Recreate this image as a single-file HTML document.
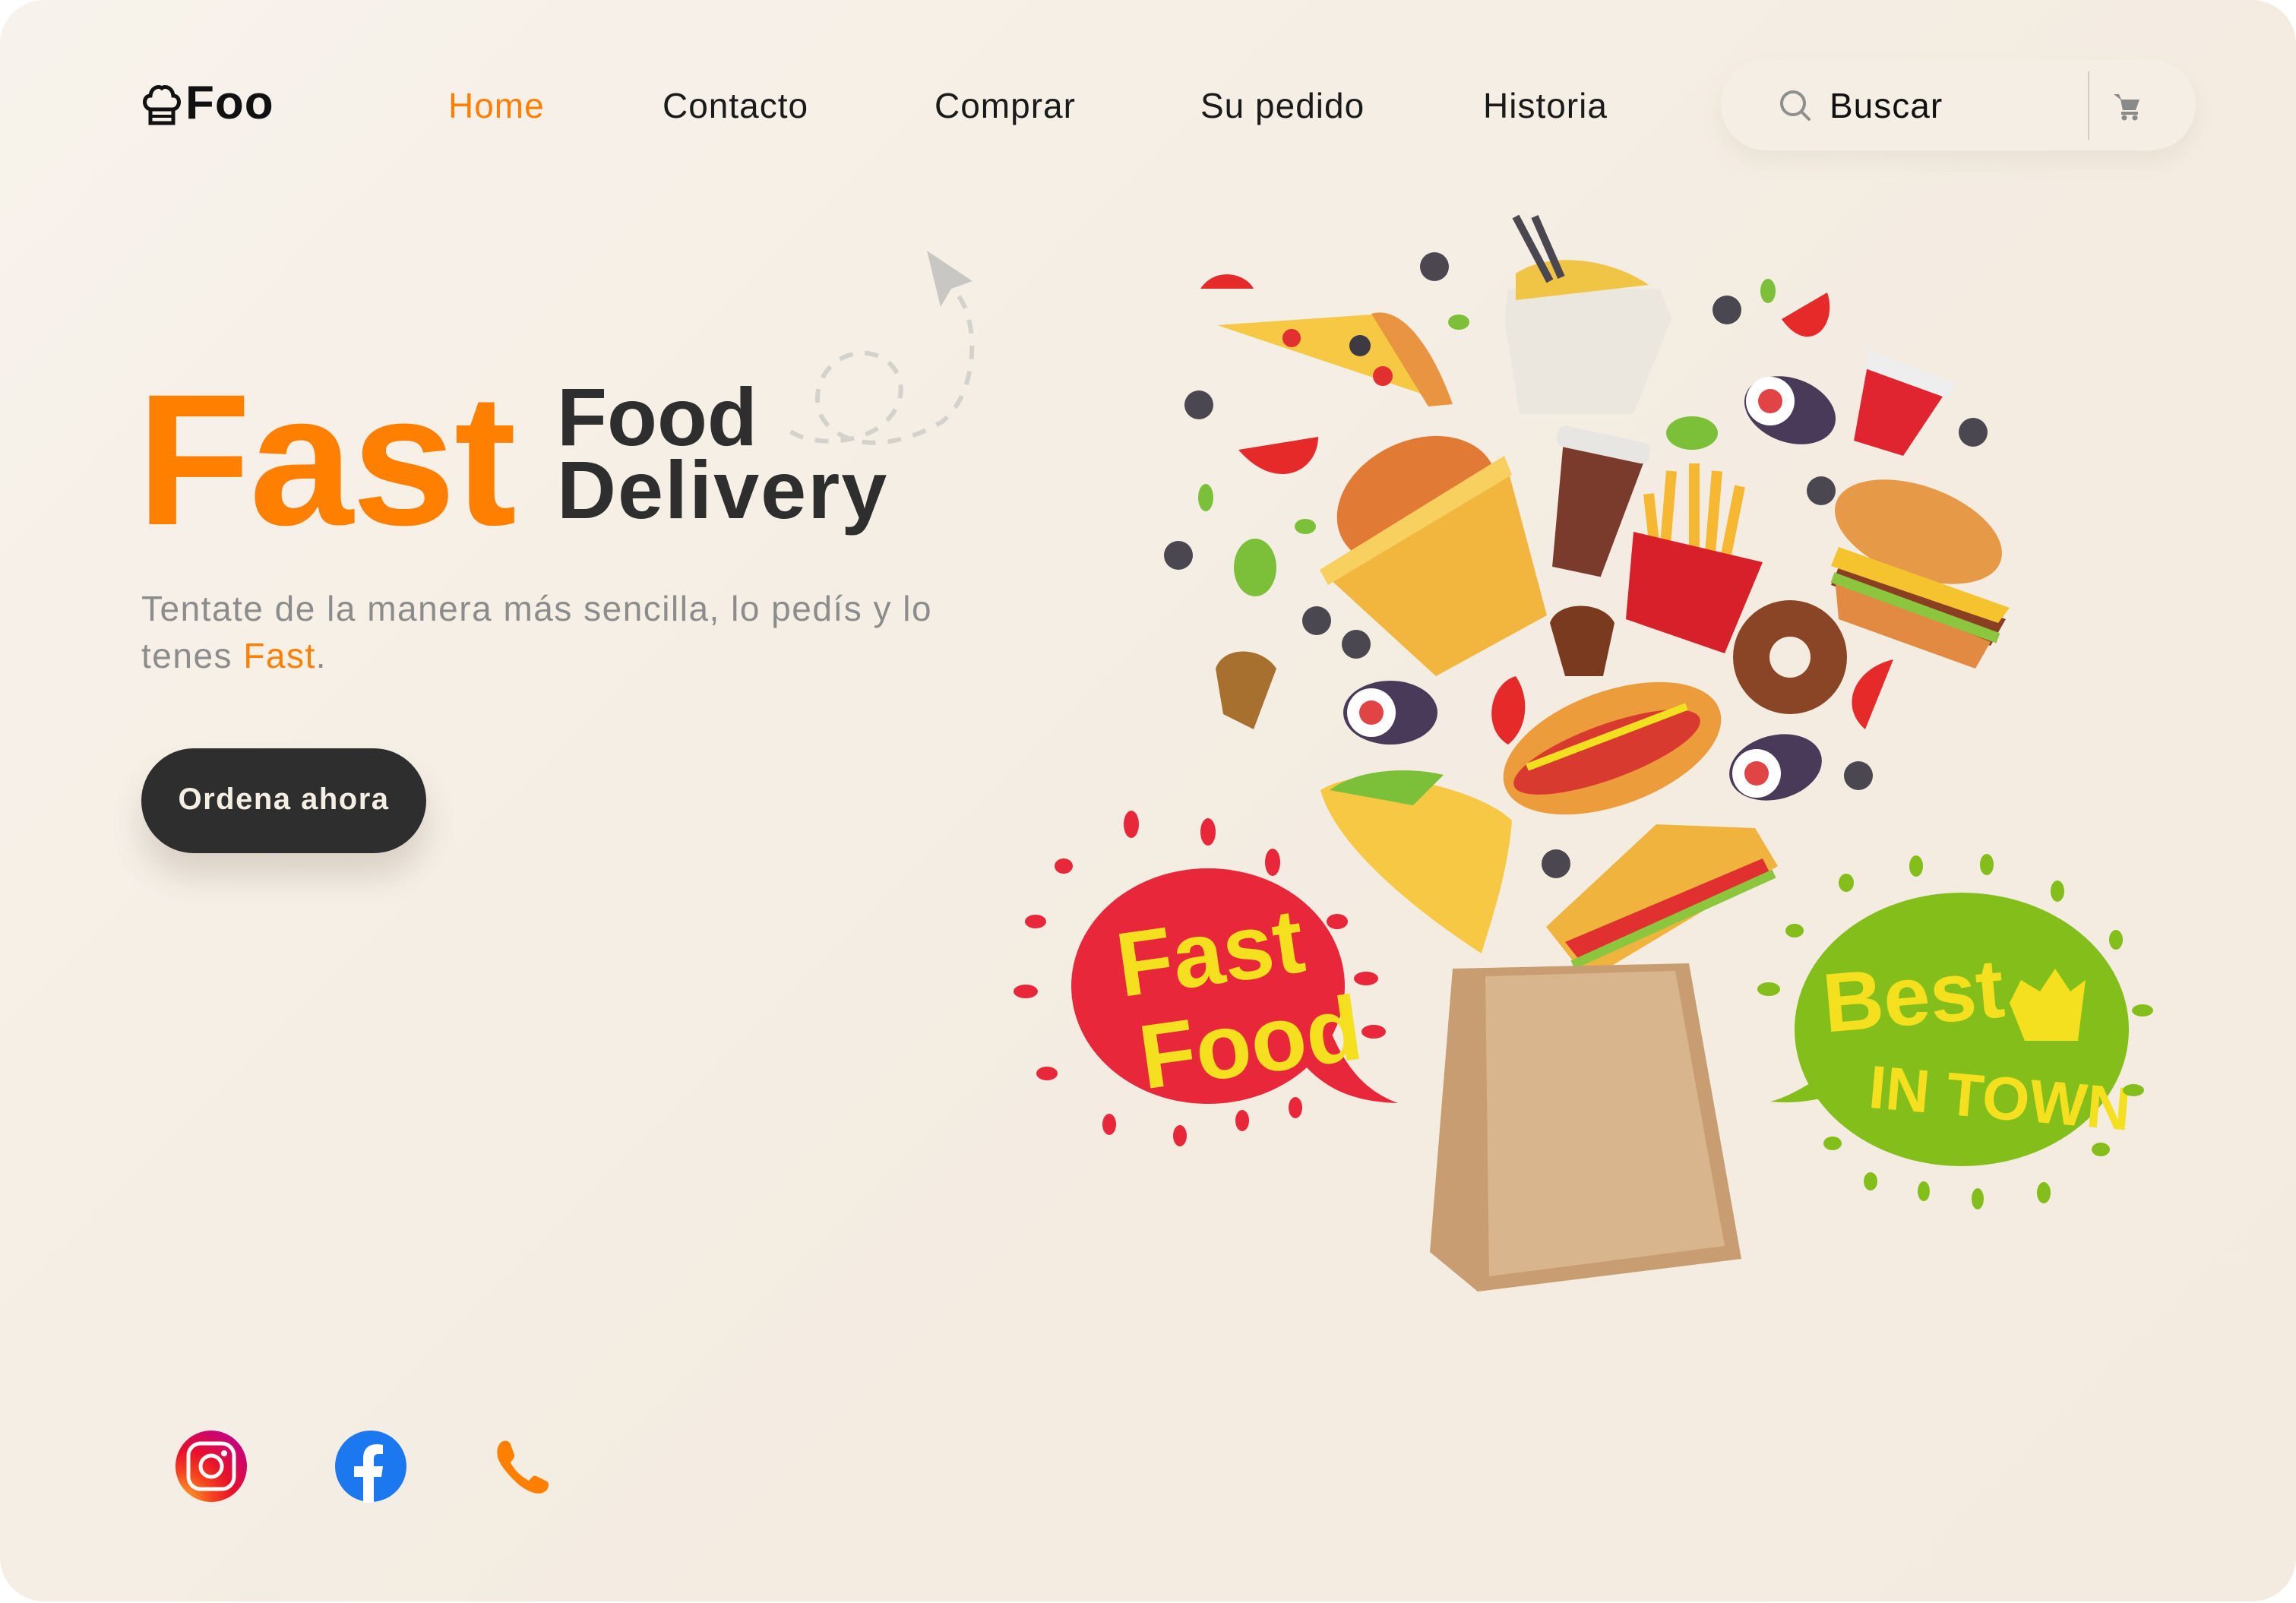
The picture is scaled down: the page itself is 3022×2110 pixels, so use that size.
<!DOCTYPE html>
<html><head><meta charset="utf-8"><style>
html,body{margin:0;padding:0;background:#fff;}
body{width:3022px;height:2110px;position:relative;overflow:hidden;font-family:"Liberation Sans",sans-serif;}
#page{position:absolute;left:0;top:0;width:3022px;height:2108px;border-radius:58px;background:linear-gradient(135deg,#f7f2eb 0%,#f4ece1 60%,#f3ebe0 100%);overflow:hidden;}
.a{position:absolute;white-space:nowrap;}
.nav{top:112px;font-size:46px;color:#1a1a1a;letter-spacing:1px;}
</style></head><body><div id="page">

<svg class="a" style="left:186px;top:108px" width="54" height="58" viewBox="0 0 54 58">
<path d="M12 36 C2 34 2 18 12 18 C13 8 22 4 27 8 C32 4 41 8 42 18 C52 18 52 34 42 36 Z" fill="none" stroke="#111" stroke-width="5"/>
<rect x="12" y="36" width="30" height="18" fill="none" stroke="#111" stroke-width="5"/>
<line x1="12" y1="45" x2="42" y2="45" stroke="#111" stroke-width="4"/>
</svg>
<div class="a" style="left:244px;top:100px;font-size:62px;font-weight:bold;color:#111;letter-spacing:1px;">Foo</div>

<div class="a nav" style="left:590px;color:#ff8000;">Home</div>
<div class="a nav" style="left:872px;">Contacto</div>
<div class="a nav" style="left:1230px;">Comprar</div>
<div class="a nav" style="left:1580px;">Su pedido</div>
<div class="a nav" style="left:1952px;">Historia</div>

<div class="a" style="left:2265px;top:78px;width:625px;height:120px;border-radius:60px;background:#f5eee4;box-shadow:0 14px 30px rgba(120,100,70,0.08);"></div>
<svg class="a" style="left:2340px;top:116px" width="48" height="48" viewBox="0 0 48 48"><circle cx="20" cy="20" r="15" fill="none" stroke="#8f8f8f" stroke-width="4"/><line x1="31" y1="31" x2="41" y2="41" stroke="#8f8f8f" stroke-width="4" stroke-linecap="round"/></svg>
<div class="a" style="left:2408px;top:112px;font-size:46px;color:#111;letter-spacing:1px;">Buscar</div>
<div class="a" style="left:2748px;top:94px;width:2px;height:90px;background:#d3ccc2;"></div>
<svg class="a" style="left:2780px;top:121px" width="40" height="38" viewBox="0 0 40 38"><path d="M2 3 H9 L12 10 H36 L31 24 H14 L11 10" fill="#8a8a8a"/><rect x="12" y="26" width="22" height="4" fill="#8a8a8a"/><circle cx="16" cy="34" r="3.5" fill="#8a8a8a"/><circle cx="30" cy="34" r="3.5" fill="#8a8a8a"/></svg>

<div class="a" style="left:180px;top:456px;font-size:246px;font-weight:bold;color:#ff8000;letter-spacing:-2px;line-height:300px;">Fast</div>
<div class="a" style="left:733px;top:494px;font-size:108px;font-weight:bold;color:#2e2e2e;line-height:110px;">Food</div>
<div class="a" style="left:733px;top:590px;font-size:108px;font-weight:bold;color:#2e2e2e;line-height:110px;letter-spacing:2px;">Delivery</div>

<svg class="a" style="left:1020px;top:320px" width="300" height="290" viewBox="1020 320 300 290">
<path d="M1262 390 C1290 430 1285 520 1240 555 C1200 580 1130 600 1090 560 C1060 530 1080 470 1130 465 C1180 460 1210 520 1160 560 C1130 585 1060 590 1030 560" fill="none" stroke="#d4d2cc" stroke-width="6" stroke-dasharray="18 16"/>
<path d="M1220 330 L1280 370 L1252 380 L1238 404 Z" fill="#c9c7c3"/>
</svg>

<div class="a" style="left:186px;top:770px;font-size:46px;color:#8c8c8c;line-height:62px;letter-spacing:1.5px;">Tentate de la manera más sencilla, lo pedís y lo<br>tenes <span style="color:#ff8000">Fast</span>.</div>

<div class="a" style="left:186px;top:985px;width:375px;height:138px;border-radius:69px;background:#2e2e2e;box-shadow:0 30px 40px rgba(100,80,60,0.18);"></div>
<div class="a" style="left:186px;top:1030px;width:375px;text-align:center;font-size:40px;font-weight:bold;color:#f5eee4;letter-spacing:1.5px;">Ordena ahora</div>

<svg class="a" style="left:230px;top:1882px" width="96" height="96" viewBox="0 0 96 96">
<defs><radialGradient id="ig" cx="0.1" cy="1" r="1.2"><stop offset="0" stop-color="#fdb12a"/><stop offset="0.35" stop-color="#f5431e"/><stop offset="0.6" stop-color="#e8102b"/><stop offset="1" stop-color="#c1008a"/></radialGradient></defs>
<circle cx="48" cy="48" r="47" fill="url(#ig)"/>
<rect x="18" y="18" width="60" height="60" rx="16" fill="none" stroke="#fff" stroke-width="5"/>
<circle cx="48" cy="48" r="14" fill="none" stroke="#fff" stroke-width="5"/>
<circle cx="65" cy="31" r="4" fill="#fff"/>
</svg>
<svg class="a" style="left:440px;top:1882px" width="96" height="96" viewBox="0 0 96 96">
<circle cx="48" cy="48" r="47" fill="#1b78ef"/>
<path d="M38 96 V62 H26 V48 H38 V38 C38 25 45 19 56 19 C60 19 64 20 64 20 V32 H58 C54 32 52 34 52 38 V48 H64 L62 62 H52 V96 Z" fill="#fff"/>
</svg>
<svg class="a" style="left:650px;top:1895px" width="76" height="72" viewBox="0 0 76 72">
<path d="M10 3 C16 0 20 2 22 6 L27 20 C28 23 24 27 22 30 C28 42 36 48 46 54 C50 50 52 46 56 48 L70 55 C74 58 72 66 66 69 C58 74 44 68 34 60 C22 50 10 36 6 26 C3 17 4 8 10 3 Z" fill="#ff8000"/>
</svg>

<svg class="a" style="left:1300px;top:260px" width="1600" height="1460" viewBox="1300 260 1600 1460">
<g fill="#4a4750">
<circle cx="1888" cy="351" r="19"/><circle cx="1578" cy="533" r="19"/><circle cx="1551" cy="731" r="19"/><circle cx="1733" cy="817" r="19"/><circle cx="1785" cy="848" r="19"/><circle cx="2273" cy="408" r="19"/><circle cx="2397" cy="646" r="19"/><circle cx="2597" cy="569" r="19"/><circle cx="2446" cy="1021" r="19"/><circle cx="2048" cy="1137" r="19"/>
</g>
<path d="M1602 428 L1820 413 L1912 532 Z" fill="#f6c844"/><path d="M1805 413 C1850 400 1890 470 1912 532 L1880 535 Z" fill="#e99440"/>
<circle cx="1700" cy="445" r="12" fill="#e23030"/><circle cx="1790" cy="455" r="14" fill="#3e3a44"/><circle cx="1820" cy="495" r="13" fill="#e23030"/>
<path d="M1985 380 L2185 380 L2200 420 L2150 545 L2000 545 L1980 420 Z" fill="#ebe7df"/><path d="M1995 360 C2040 330 2120 340 2170 375 L1995 395 Z" fill="#f0c444"/>
<line x1="1995" y1="285" x2="2040" y2="370" stroke="#4a4750" stroke-width="10"/><line x1="2020" y1="285" x2="2055" y2="365" stroke="#4a4750" stroke-width="10"/>
<ellipse cx="1865" cy="660" rx="110" ry="80" fill="#e07a35" transform="rotate(-25 1865 660)"/>
<path d="M1737 750 L1980 600 L2036 810 L1890 890 Z" fill="#f2b63e"/><path d="M1737 750 L1980 600 L1990 625 L1748 770 Z" fill="#f7d060"/>
<path d="M2040 590 L2150 590 L2125 755 L2060 755 Z" fill="#7a3a2c" transform="rotate(12 2095 670)"/><rect x="2030" y="570" width="125" height="28" rx="10" fill="#e8e6e2" transform="rotate(12 2095 670)"/>
<g stroke="#f6b830" stroke-width="14"><line x1="2200" y1="620" x2="2190" y2="740"/><line x1="2230" y1="610" x2="2230" y2="740"/><line x1="2260" y1="620" x2="2250" y2="740"/><line x1="2290" y1="640" x2="2270" y2="740"/><line x1="2170" y1="650" x2="2180" y2="740"/></g>
<path d="M2150 700 L2320 740 L2270 860 L2140 815 Z" fill="#d7202a"/>
<path d="M2460 470 L2565 510 L2505 600 L2440 580 Z" fill="#e02530"/><path d="M2460 460 L2575 505 L2565 525 L2455 485 Z" fill="#eee"/>
<ellipse cx="2525" cy="700" rx="115" ry="60" fill="#e69a48" transform="rotate(20 2525 700)"/><path d="M2425 735 L2640 815 L2620 850 L2410 770 Z" fill="#8a3e22"/><path d="M2420 720 L2645 800 L2630 820 L2410 745 Z" fill="#f4c32e"/><path d="M2415 760 L2620 845 L2600 880 L2420 815 Z" fill="#e38a42"/><path d="M2412 760 L2630 840" stroke="#8cc63f" stroke-width="14"/>
<circle cx="2356" cy="865" r="75" fill="#8a4426"/><circle cx="2356" cy="865" r="27" fill="#f4ece1"/>
<g fill="#e62a2a"><path d="M1630 592 L1735 575 C1735 620 1680 650 1630 592Z"/><path d="M2345 420 L2405 385 C2420 430 2380 470 2345 420Z"/><path d="M1995 890 C1960 900 1950 960 1985 980 C2010 960 2015 920 1995 890Z"/><path d="M2492 868 L2455 960 C2420 930 2440 880 2492 868Z"/><path d="M1580 380 C1600 350 1640 360 1650 380 Z"/></g>
<g fill="#7cc03a"><ellipse cx="1652" cy="747" rx="28" ry="38"/><ellipse cx="2227" cy="570" rx="34" ry="22"/><ellipse cx="1587" cy="655" rx="10" ry="18"/><ellipse cx="1718" cy="693" rx="14" ry="10"/><ellipse cx="1920" cy="424" rx="14" ry="10"/><ellipse cx="2327" cy="383" rx="10" ry="16"/></g>
<path d="M2225 163 C2250 150 2270 165 2265 180 L2230 185 Z" fill="#f3c218"/>
<path d="M1600 880 C1610 850 1660 850 1680 880 L1650 960 L1610 940 Z" fill="#a8702e"/><path d="M2040 820 C2050 790 2110 790 2125 820 L2110 890 L2060 890 Z" fill="#7a3a20"/>
<g><ellipse cx="1830" cy="938" rx="62" ry="42" fill="#4a3a5a"/><circle cx="1805" cy="938" r="32" fill="#fff"/><circle cx="1805" cy="938" r="16" fill="#e04444"/></g>
<g><ellipse cx="2337" cy="1010" rx="62" ry="42" fill="#4a3a5a" transform="rotate(-15 2337 1010)"/><circle cx="2312" cy="1018" r="32" fill="#fff"/><circle cx="2312" cy="1018" r="16" fill="#e04444"/></g>
<g><ellipse cx="2356" cy="540" rx="62" ry="42" fill="#4a3a5a" transform="rotate(20 2356 540)"/><circle cx="2330" cy="528" r="32" fill="#fff"/><circle cx="2330" cy="528" r="16" fill="#e04444"/></g>
<ellipse cx="2122" cy="985" rx="150" ry="75" fill="#ec9c3a" transform="rotate(-20 2122 985)"/><ellipse cx="2115" cy="990" rx="130" ry="36" fill="#d93a30" transform="rotate(-20 2115 990)"/><path d="M2010 1010 L2220 930" stroke="#f2e020" stroke-width="10"/>
<path d="M1738 1040 C1800 1000 1950 1040 1990 1080 C1985 1150 1960 1220 1950 1255 C1880 1210 1760 1120 1738 1040 Z" fill="#f6c844"/><path d="M1750 1040 C1790 1010 1860 1010 1900 1020 L1860 1060 Z" fill="#7cc03a"/>
<path d="M2035 1220 L2180 1085 L2310 1090 L2340 1140 L2090 1290 Z" fill="#f0b43e"/><path d="M2060 1240 L2320 1130 L2330 1150 L2080 1265 Z" fill="#e03030"/><path d="M2070 1270 L2335 1150" stroke="#8cc63f" stroke-width="12"/>
<path d="M1912 1275 L2223 1268 L2292 1657 L1945 1700 L1882 1648 Z" fill="#c89d72"/><path d="M1955 1285 L2205 1278 L2270 1640 L1960 1680 Z" fill="#d9b58e"/>
<ellipse cx="1590" cy="1298" rx="180" ry="155" fill="#e8283a"/><path d="M1700 1380 C1740 1440 1790 1450 1840 1452 C1780 1430 1760 1380 1740 1330 Z" fill="#e8283a"/>
<text x="1470" y="1300" font-family="Liberation Sans,sans-serif" font-weight="bold" font-size="120" fill="#f5e020" transform="rotate(-8 1560 1260)">Fast</text>
<text x="1500" y="1420" font-family="Liberation Sans,sans-serif" font-weight="bold" font-size="120" fill="#f5e020" transform="rotate(-8 1600 1380)">Food</text>
<g fill="#e8283a"><ellipse cx="1489" cy="1085" rx="10" ry="18"/><ellipse cx="1590" cy="1095" rx="10" ry="18"/><ellipse cx="1675" cy="1135" rx="10" ry="18"/><ellipse cx="1400" cy="1140" rx="12" ry="10"/><ellipse cx="1363" cy="1213" rx="14" ry="9"/><ellipse cx="1350" cy="1305" rx="16" ry="9"/><ellipse cx="1378" cy="1413" rx="14" ry="9"/><ellipse cx="1460" cy="1480" rx="9" ry="14"/><ellipse cx="1553" cy="1495" rx="9" ry="14"/><ellipse cx="1635" cy="1475" rx="9" ry="14"/><ellipse cx="1705" cy="1458" rx="9" ry="14"/><ellipse cx="1798" cy="1288" rx="16" ry="9"/><ellipse cx="1808" cy="1358" rx="16" ry="9"/><ellipse cx="1760" cy="1213" rx="14" ry="10"/></g>
<ellipse cx="2582" cy="1355" rx="220" ry="180" fill="#84be1a"/><path d="M2420 1400 C2380 1430 2350 1445 2330 1450 C2380 1455 2430 1440 2470 1420 Z" fill="#84be1a"/>
<text x="2400" y="1350" font-family="Liberation Sans,sans-serif" font-weight="bold" font-size="110" fill="#f5e020" transform="rotate(-5 2500 1320)">Best</text>
<text x="2460" y="1470" font-family="Liberation Sans,sans-serif" font-weight="bold" font-size="80" fill="#f5e020" transform="rotate(5 2600 1440)">IN TOWN</text>
<path d="M2645 1320 L2660 1290 L2685 1305 L2705 1275 L2725 1305 L2745 1290 L2735 1370 L2665 1370 Z" fill="#f5e020"/>
<g fill="#84be1a"><ellipse cx="2522" cy="1140" rx="9" ry="14"/><ellipse cx="2615" cy="1138" rx="9" ry="14"/><ellipse cx="2708" cy="1173" rx="9" ry="14"/><ellipse cx="2430" cy="1162" rx="10" ry="12"/><ellipse cx="2785" cy="1237" rx="9" ry="13"/><ellipse cx="2820" cy="1330" rx="14" ry="8"/><ellipse cx="2808" cy="1435" rx="14" ry="8"/><ellipse cx="2765" cy="1513" rx="12" ry="9"/><ellipse cx="2690" cy="1570" rx="9" ry="14"/><ellipse cx="2603" cy="1578" rx="8" ry="14"/><ellipse cx="2532" cy="1568" rx="8" ry="13"/><ellipse cx="2462" cy="1555" rx="9" ry="12"/><ellipse cx="2412" cy="1505" rx="12" ry="9"/><ellipse cx="2328" cy="1302" rx="15" ry="9"/><ellipse cx="2362" cy="1225" rx="12" ry="9"/></g>
</svg>

</div></body></html>
